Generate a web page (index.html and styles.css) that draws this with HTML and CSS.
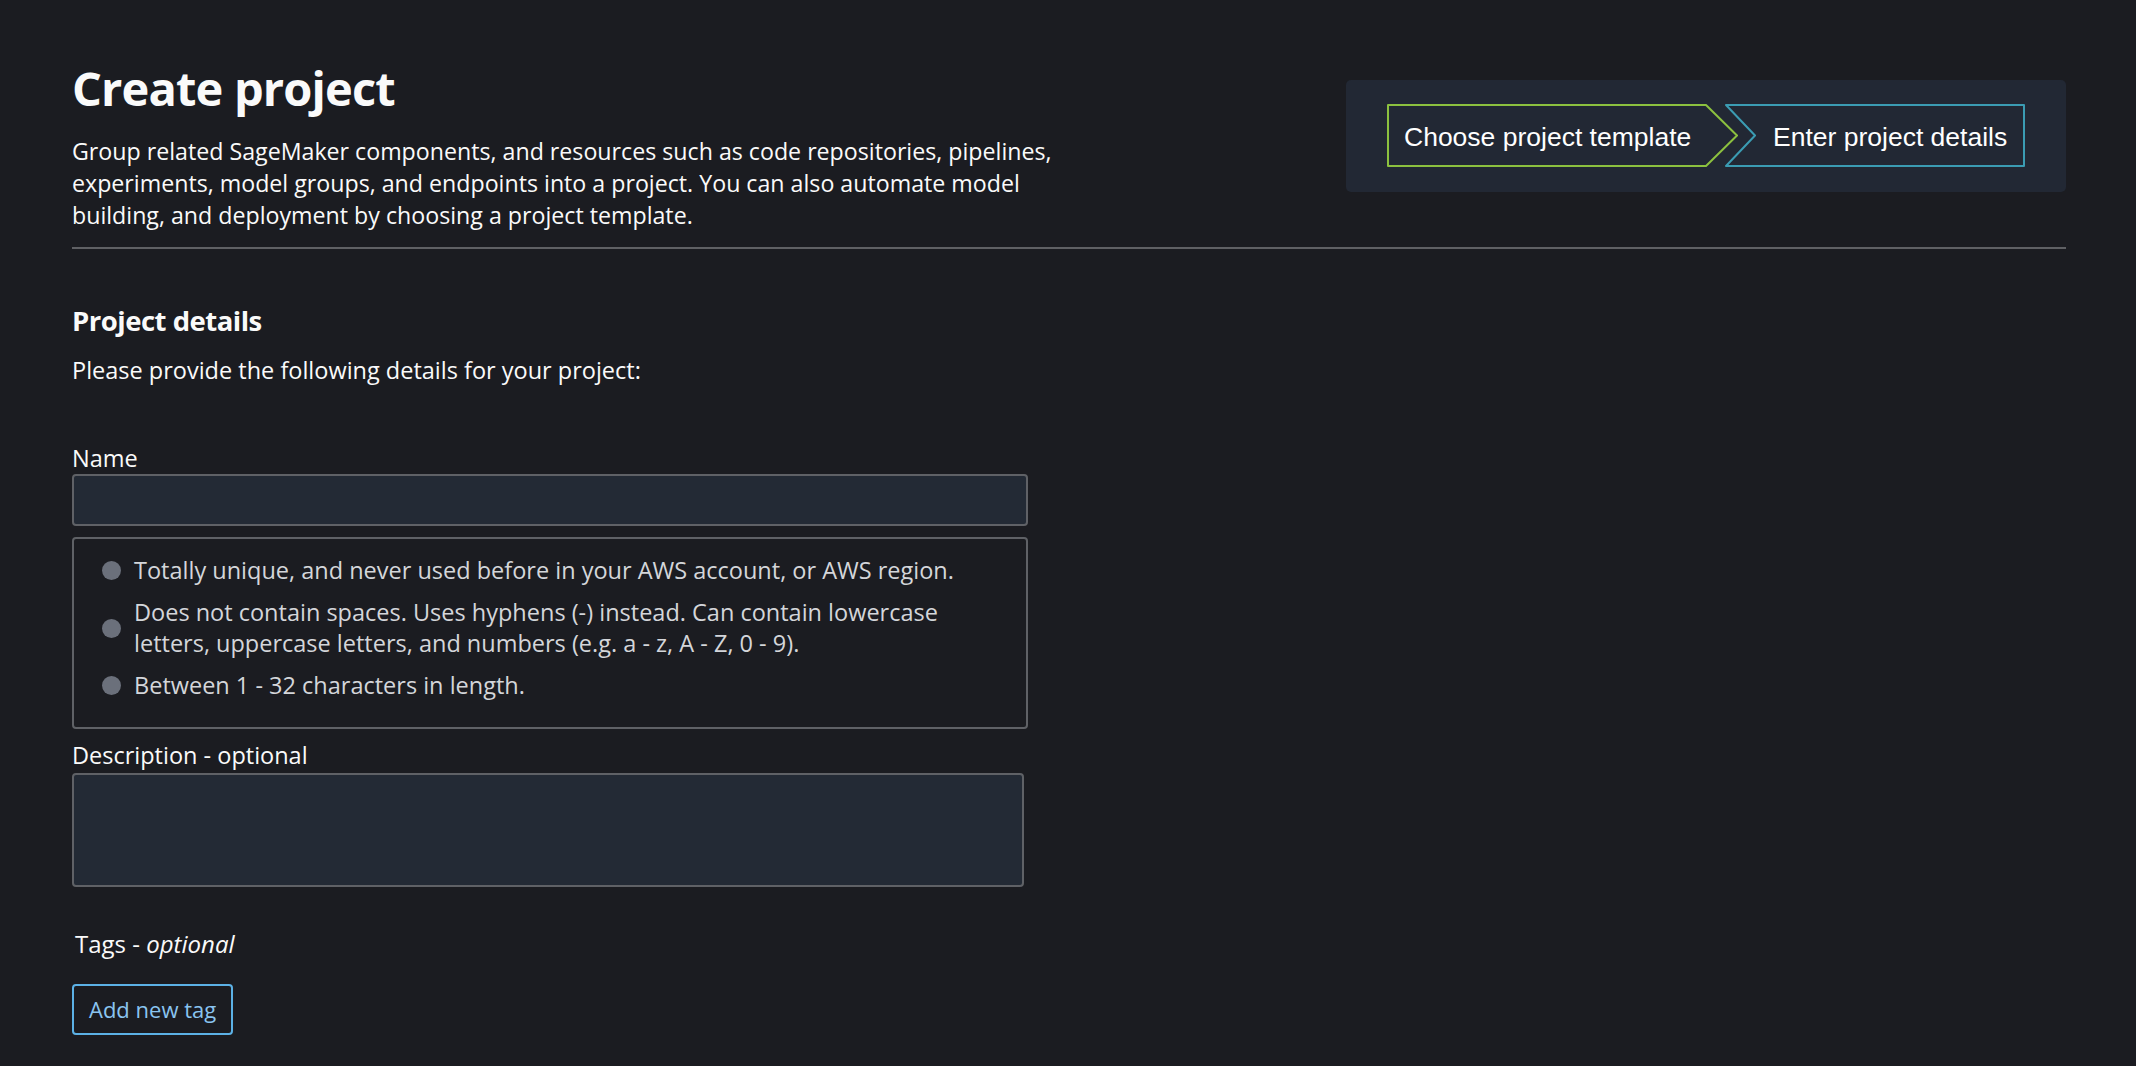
FILE: index.html
```html
<!DOCTYPE html>
<html lang="en">
<head>
<meta charset="utf-8">
<title>Create project</title>
<link rel="stylesheet" href="styles.css">
</head>
<body>
<main class="page">
  <header class="page-header">
    <div class="intro">
      <h1 class="title">Create project</h1>
      <p class="lead">Group related SageMaker components, and resources such as code repositories, pipelines, experiments, model groups, and endpoints into a project. You can also automate model building, and deployment by choosing a project template.</p>
    </div>
    <div class="steps-panel">
      <div class="steps">
        <div class="step step-first">
          <svg class="step-shape" viewBox="0 0 352 63" width="352" height="63" aria-hidden="true">
            <polygon points="1,1 319,1 350,31.5 319,62 1,62" fill="none" stroke="#8cc13f" stroke-width="2" stroke-linejoin="round"/>
          </svg>
          <span class="step-text">Choose project template</span>
        </div>
        <div class="step step-second">
          <svg class="step-shape" viewBox="0 0 301 63" width="301" height="63" aria-hidden="true">
            <polygon points="1,1 299,1 299,62 1,62 30,31.5" fill="none" stroke="#3b9cb3" stroke-width="2" stroke-linejoin="round"/>
          </svg>
          <span class="step-text">Enter project details</span>
        </div>
      </div>
    </div>
  </header>
  <hr class="divider">
  <section class="details">
    <h2 class="section-title">Project details</h2>
    <p class="section-desc">Please provide the following details for your project:</p>

    <div class="field field-name">
      <label class="field-label" for="name">Name</label>
      <input class="text-input" id="name" type="text">
      <ul class="rules">
        <li class="rule">Totally unique, and never used before in your AWS account, or AWS region.</li>
        <li class="rule">Does not contain spaces. Uses hyphens (-) instead. Can contain lowercase letters, uppercase letters, and numbers (e.g. a - z, A - Z, 0 - 9).</li>
        <li class="rule">Between 1 - 32 characters in length.</li>
      </ul>
    </div>

    <div class="field field-desc">
      <label class="field-label" for="desc">Description - optional</label>
      <textarea class="text-area" id="desc"></textarea>
    </div>

    <div class="tags">
      <div class="tags-label">Tags - <em>optional</em></div>
      <button class="btn-outline" type="button">Add new tag</button>
    </div>
  </section>
</main>
</body>
</html>
```
FILE: styles.css
```css
html, body {
  margin: 0;
  padding: 0;
}
body {
  background: #1b1c21;
  color: #fafafa;
  font-family: "Open Sans", "Noto Sans", sans-serif;
  font-size: 23.5px;
  line-height: 32px;
}
.page {
  padding: 60px 70px 0 72px;
}
.page-header {
  display: flex;
  justify-content: space-between;
  align-items: flex-start;
}
.title {
  margin: 0;
  font-size: 47px;
  letter-spacing: -0.85px;
  line-height: 56px;
  font-weight: 700;
  color: #fafafa;
}
.lead {
  margin: 19px 0 0;
  max-width: 1010px;
  font-size: 23.2px;
}
.steps-panel {
  margin-top: 20px;
  width: 720px;
  height: 112px;
  box-sizing: border-box;
  padding: 24px 0 0 41px;
  background: #222834;
  border-radius: 5px;
}
.steps {
  display: flex;
}
.step {
  position: relative;
  flex: none;
  height: 63px;
  box-sizing: border-box;
  font-family: "Liberation Sans", Arial, sans-serif;
  font-size: 26.5px;
  line-height: 63px;
  color: #ffffff;
  padding-top: 2px;
}
.step-shape {
  position: absolute;
  left: 0;
  top: 0;
}
.step-text {
  position: relative;
}
.step-first {
  width: 352px;
  padding-left: 17px;
}
.step-second {
  width: 301px;
  margin-left: -14px;
  padding-left: 48px;
}
.divider {
  margin: 16px 0 0;
  border: 0;
  border-top: 2px solid #5f6064;
  height: 0;
}
.section-title {
  margin: 54px 0 0;
  font-size: 27.5px;
  letter-spacing: -0.5px;
  line-height: 36px;
  font-weight: 700;
}
.section-desc {
  margin: 15px 0 0;
}
.field-name {
  margin-top: 56px;
}
.field-label {
  display: block;
}
.text-input {
  display: block;
  width: 956px;
  height: 52px;
  box-sizing: border-box;
  margin: 0;
  background: #232a35;
  border: 2px solid #5f6166;
  border-radius: 4px;
  color: #fafafa;
  font: inherit;
  padding: 0 12px;
}
.rules {
  list-style: none;
  margin: 11px 0 0;
  width: 956px;
  box-sizing: border-box;
  border: 2px solid #5f6166;
  border-radius: 4px;
  padding: 16px 36px 26px 28px;
  display: flex;
  flex-direction: column;
  gap: 11px;
  color: #d4d6da;
  line-height: 31px;
}
.rule {
  display: flex;
  align-items: center;
  gap: 13px;
}
.rule::before {
  content: "";
  flex: none;
  width: 19px;
  height: 19px;
  border-radius: 50%;
  background: #6b707b;
}
.field-desc {
  margin-top: 10px;
}
.text-area {
  display: block;
  width: 952px;
  height: 114px;
  box-sizing: border-box;
  margin: 2px 0 0;
  background: #232a35;
  border: 2px solid #5f6166;
  border-radius: 4px;
  resize: none;
  font: inherit;
  color: #fafafa;
}
.tags {
  margin-top: 41px;
}
.tags-label {
  padding-left: 3px;
  font-size: 24px;
  line-height: 32px;
}
.tags-label em {
  font-style: italic;
}
.btn-outline {
  display: block;
  margin-top: 24px;
  height: 51px;
  box-sizing: border-box;
  padding: 0 15px;
  background: transparent;
  border: 2px solid #5cb1e6;
  border-radius: 4px;
  color: #8ac4f0;
  font-family: "Open Sans", "Noto Sans", sans-serif;
  font-size: 22px;
  font-weight: 500;
  line-height: 47px;
}
```
